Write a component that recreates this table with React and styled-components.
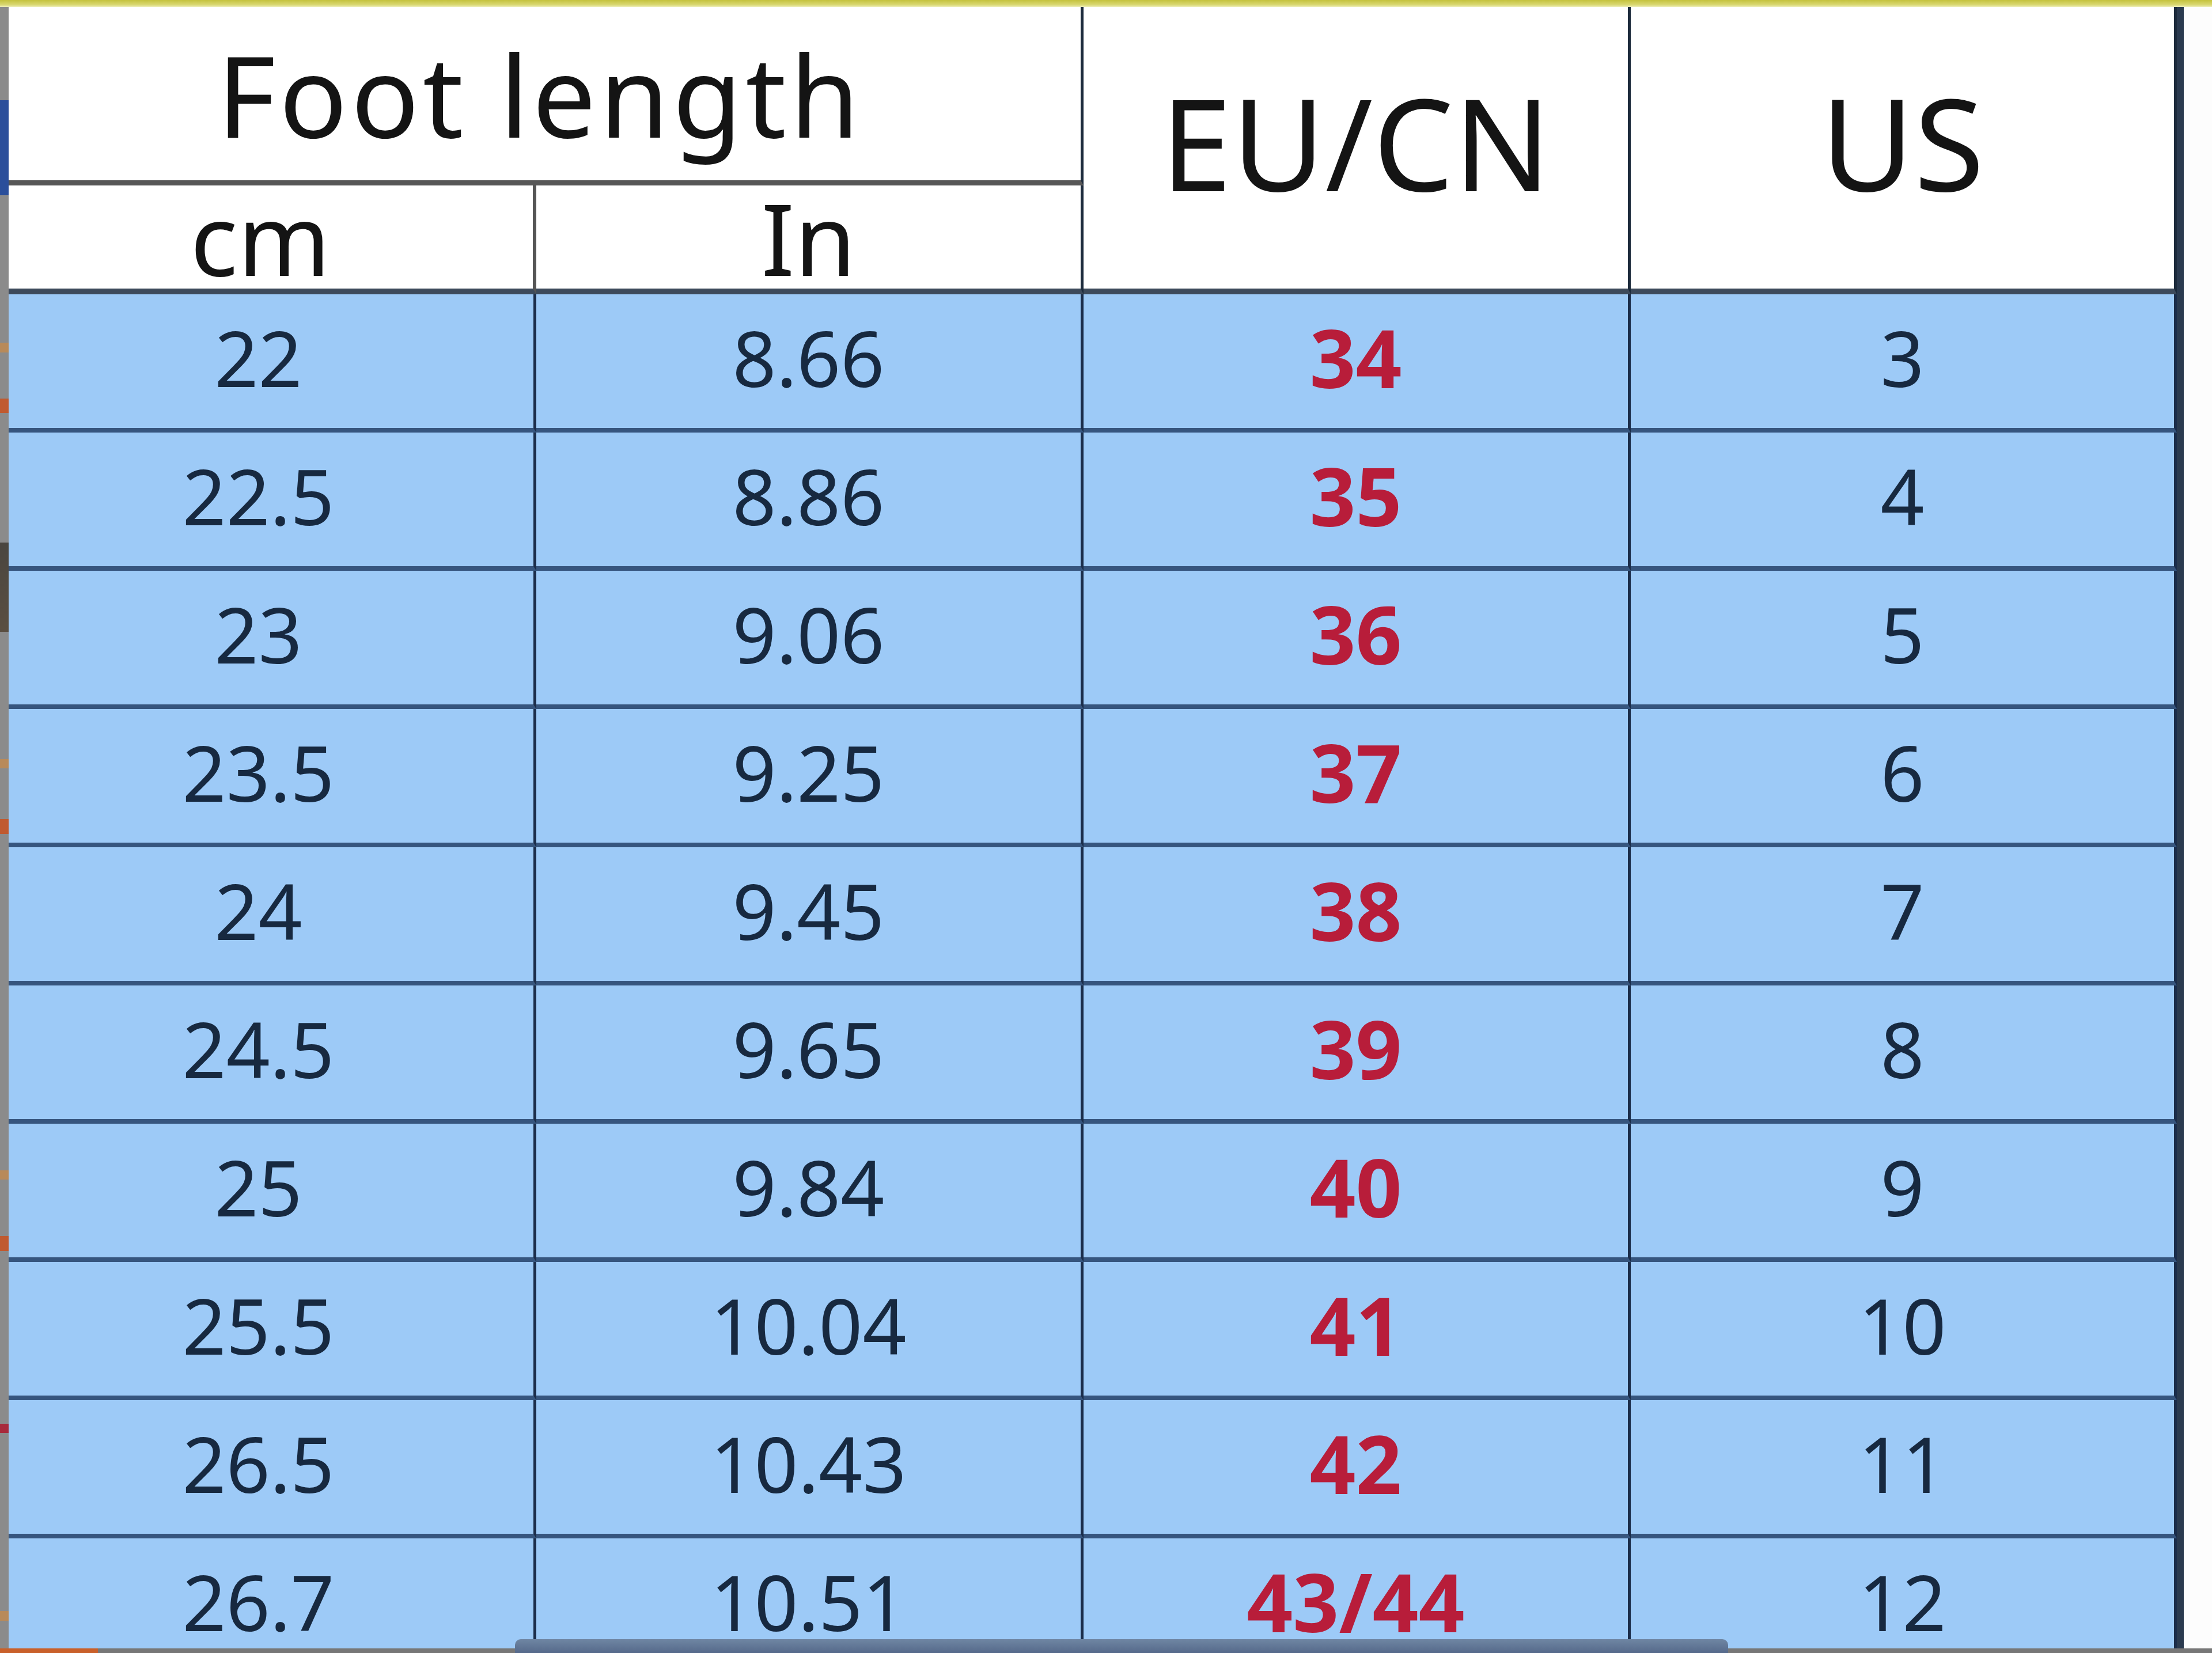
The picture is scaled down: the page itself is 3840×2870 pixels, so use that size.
import React from "react";
import styled, { createGlobalStyle } from "styled-components";

const rows = [
  ["22", "8.66", "34", "3"],
  ["22.5", "8.86", "35", "4"],
  ["23", "9.06", "36", "5"],
  ["23.5", "9.25", "37", "6"],
  ["24", "9.45", "38", "7"],
  ["24.5", "9.65", "39", "8"],
  ["25", "9.84", "40", "9"],
  ["25.5", "10.04", "41", "10"],
  ["26.5", "10.43", "42", "11"],
  ["26.7", "10.51", "43/44", "12"],
];

function App() {
  return (
    <>
      <GlobalStyle />
      <Page>
        <TopRule />
        <Main>
          <LeftStrip />
          <Sheet>
            <HeadCell $col="1 / 3" $row="1" $size={196} $track={6} $shift={16} $bottom="9px solid #575757">
              Foot length
            </HeadCell>
            <HeadCell $col="3" $row="1 / 3" $size={222} $lift={22} $bottom="10px solid #3d4a5b">
              EU/CN
            </HeadCell>
            <HeadCell $col="4" $row="1 / 3" $size={222} $lift={22} $bottom="10px solid #3d4a5b">
              US
            </HeadCell>
            <HeadCell $col="1" $row="2" $size={172} $shift={36} $divider="6px solid #555" $bottom="10px solid #3d4a5b">
              cm
            </HeadCell>
            <HeadCell $col="2" $row="2" $size={172} $bottom="10px solid #3d4a5b">
              In
            </HeadCell>

            {rows.map((r, i) =>
              r.map((v, j) => (
                <Cell key={i + "-" + j} $first={j === 0} $accent={j === 2}>
                  {v}
                </Cell>
              ))
            )}
          </Sheet>
          <RightStrip />
        </Main>
        <BottomEdge />
        <ScrollThumb />
      </Page>
    </>
  );
}

export default App;

//! Styled Elements
const GlobalStyle = createGlobalStyle`
  html, body {
    margin: 0;
    padding: 0;
    background: #fff;
  }
  body {
    font-family: "Noto Sans", "Liberation Sans", sans-serif;
  }
`;

const Page = styled.div`
  position: relative;
  width: 3840px;
  height: 2870px;
  overflow: hidden;
  display: flex;
  flex-direction: column;
  background: #fff;
`;

const TopRule = styled.div`
  height: 12px;
  flex: none;
  background: linear-gradient(#c4c23c, #d9d873 70%, #eeeeb8);
`;

const Main = styled.div`
  display: flex;
  flex: 1;
  min-height: 0;
`;

const LeftStrip = styled.div`
  width: 15px;
  flex: none;
  background:
    linear-gradient(
      to bottom,
      transparent 162px, #2b4f9b 162px, #2b4f9b 327px, transparent 327px,
      transparent 583px, #b88a5a 583px, #b88a5a 600px, transparent 600px,
      transparent 680px, #c05a30 680px, #c05a30 705px, transparent 705px,
      transparent 930px, #4a4640 930px, #5a4e40 1085px, transparent 1085px,
      transparent 1306px, #b88a5a 1306px, #b88a5a 1322px, transparent 1322px,
      transparent 1410px, #c05a30 1410px, #c05a30 1436px, transparent 1436px,
      transparent 2020px, #b88a5a 2020px, #b88a5a 2036px, transparent 2036px,
      transparent 2134px, #c05a30 2134px, #c05a30 2160px, transparent 2160px,
      transparent 2460px, #a82a3c 2460px, #a82a3c 2476px, transparent 2476px,
      transparent 2785px, #b88a5a 2785px, #b88a5a 2802px, transparent 2802px
    ),
    #8b8b8b;
`;

const Sheet = styled.div`
  display: grid;
  grid-template-columns: 916px 950px 950px 948px;
  grid-template-rows: 310px 189px repeat(10, 240px);
  background: #9dcaf7;
  flex: none;
`;

const HeadCell = styled.div`
  grid-column: ${(p) => p.$col};
  grid-row: ${(p) => p.$row};
  display: flex;
  align-items: center;
  justify-content: center;
  box-sizing: border-box;
  background: #fff;
  color: #141414;
  font-family: "Noto Sans", "Liberation Sans", sans-serif;
  font-size: ${(p) => p.$size}px;
  letter-spacing: ${(p) => p.$track || 0}px;
  line-height: 1;
  padding-bottom: ${(p) => p.$lift || 0}px;
  padding-right: ${(p) => p.$shift || 0}px;
  border-right: ${(p) => p.$divider || "5px solid #1d2b3c"};
  border-bottom: ${(p) => p.$bottom};
`;

const Cell = styled.div`
  display: flex;
  align-items: center;
  justify-content: center;
  box-sizing: border-box;
  font-family: "Noto Sans", "Liberation Sans", sans-serif;
  font-size: ${(p) => (p.$accent ? 140 : 133)}px;
  font-weight: ${(p) => (p.$accent ? 700 : 400)};
  color: ${(p) => (p.$accent ? "#b81d3a" : "#172940")};
  line-height: 1;
  padding-bottom: 14px;
  padding-right: ${(p) => (p.$first ? 44 : 0)}px;
  border-right: 5px solid #1b2d4a;
  border-bottom: 8px solid #36557e;
`;

const RightStrip = styled.div`
  flex: 1;
  background: #fdfdfd;
  border-left: 12px solid #2a3a4f;
`;

const BottomEdge = styled.div`
  position: absolute;
  left: 0;
  right: 0;
  bottom: 0;
  height: 8px;
  background: linear-gradient(to right, #c9602a 0, #c9602a 170px, #777 170px);
`;

const ScrollThumb = styled.div`
  position: absolute;
  left: 894px;
  bottom: 0;
  width: 2106px;
  height: 24px;
  border-radius: 10px 10px 0 0;
  background: linear-gradient(#6f86a3, #55698a);
`;
